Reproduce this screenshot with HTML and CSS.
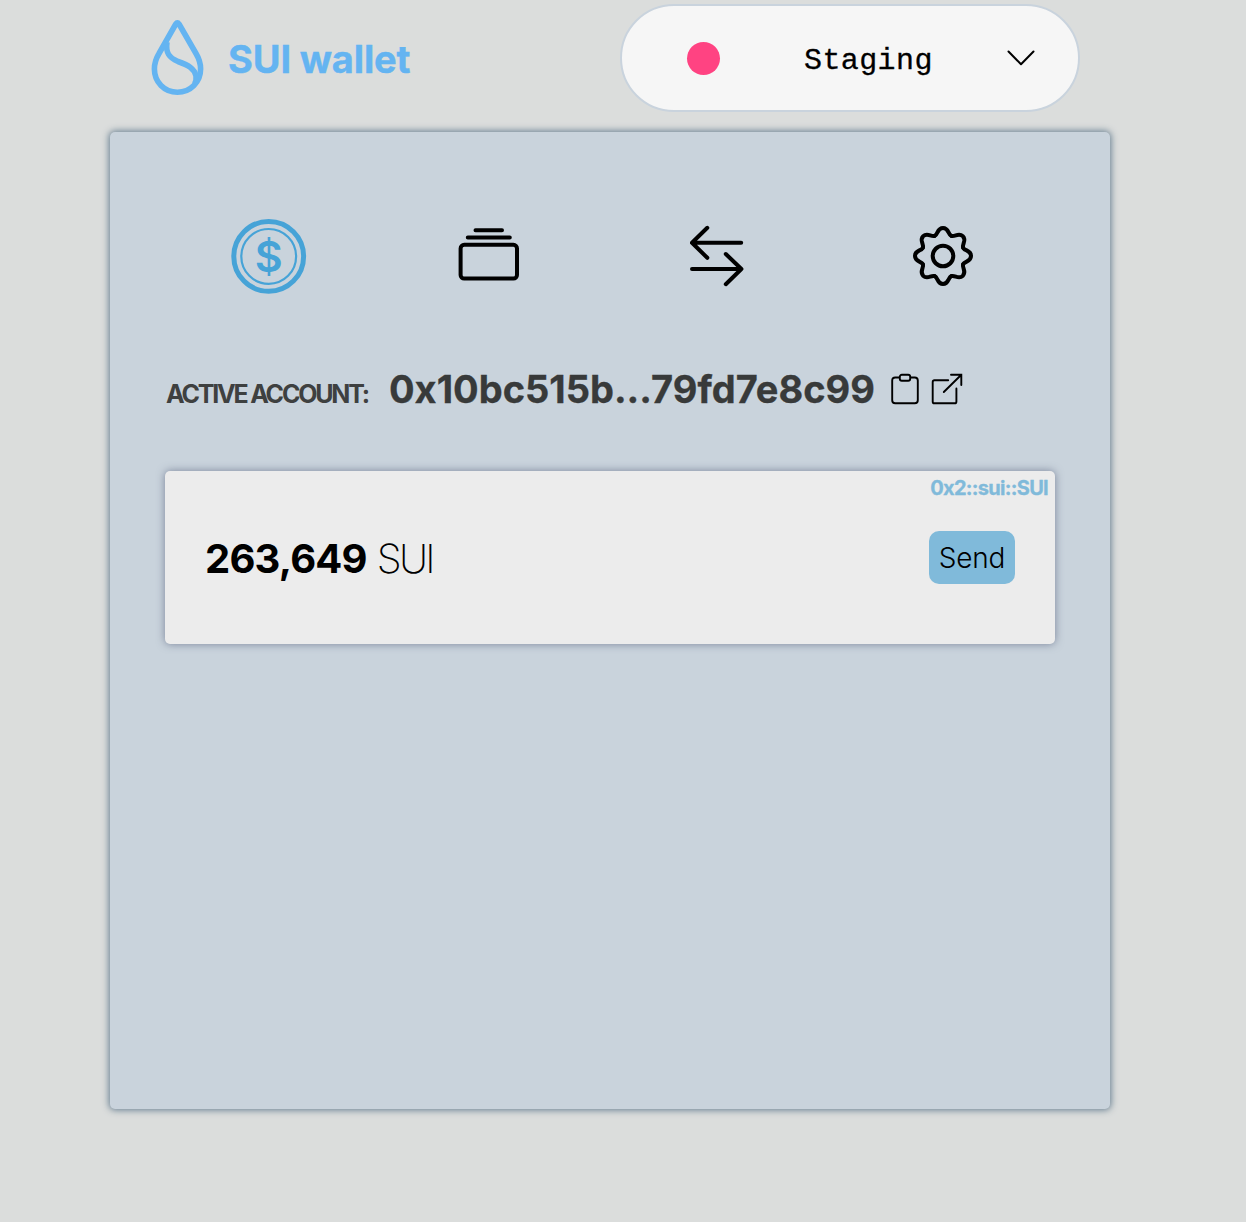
FILE: index.html
```html
<!DOCTYPE html>
<html lang="en">
<head>
<meta charset="utf-8">
<title>SUI wallet</title>
<link rel="stylesheet" href="styles.css">
</head>
<body>
<header class="header">
  <div class="brand">
    <svg class="drop" width="56" height="80" viewBox="0 0 56 80">
      <path d="M25.8 6 Q27.4 3.6 29 6 L46 35.5 C49 40.5 50.6 45 50.6 51 C50.6 64 40.5 74.2 27.4 74.2 C14.3 74.2 4.4 64 4.4 51 C4.4 45 6 40.5 9 35.5 Z"/>
      <path d="M17 24 C15.5 35 19 39.5 28 43.5 C38 47 44.5 50.5 46 58 C46.4 61 45.8 64 44.5 66"/>
    </svg>
    <h1 class="brand-name">SUI wallet</h1>
  </div>
  <button class="network">
    <span class="dot"></span>
    <span class="network-name">Staging</span>
    <svg class="chevron" width="30" height="18" viewBox="0 0 30 18"><path d="M2.5 2.5 L15 15.3 L27.5 2.5"/></svg>
  </button>
</header>
<main class="panel">
  <nav class="tabs">
    <a class="tab"><svg class="icon coin" width="76" height="76" viewBox="0 0 76 76">
      <circle class="rim" cx="37.7" cy="38.4" r="34.9"/><circle class="ring" cx="37.7" cy="38.4" r="27.4"/>
      <text class="dollar" x="37.7" y="53.7" text-anchor="middle">$</text></svg></a>
    <a class="tab tab-wallet"><svg class="icon" width="62" height="62" viewBox="0 0 62 62">
      <path d="M17.5 5.2H44M9.8 12.6H51.8"/><rect x="2.6" y="19.8" width="56.4" height="33.8" rx="3.6"/></svg></a>
    <a class="tab tab-swap"><svg class="icon" width="54" height="62" viewBox="0 0 54 62">
      <path d="M51.2 17.7H2M17.3 2.8L2 17.8L17.3 32.8M2 44H51.4M35.8 29L51.4 44L35.8 59.2"/></svg></a>
    <a class="tab tab-settings"><svg class="icon" width="62" height="62" viewBox="-31 -31 62 62">
      <defs><path id="tooth" d="M-8.35 -20.14C-4.8 -21.6 -6 -28 0 -28C6 -28 4.8 -21.6 8.35 -20.14"/></defs>
      <use href="#tooth"/><use href="#tooth" transform="rotate(45)"/><use href="#tooth" transform="rotate(90)"/><use href="#tooth" transform="rotate(135)"/>
      <use href="#tooth" transform="rotate(180)"/><use href="#tooth" transform="rotate(225)"/><use href="#tooth" transform="rotate(270)"/><use href="#tooth" transform="rotate(315)"/>
      <circle r="10.3"/></svg></a>
  </nav>
  <div class="account">
    <span class="account-label">ACTIVE ACCOUNT:</span>
    <span class="account-id">0x10bc515b...79fd7e8c99</span>
    <svg class="action" width="28" height="32" viewBox="0 0 28 32"><path d="M7.8 4.5H4.2Q1.2 4.5 1.2 7.5V27.3Q1.2 30.3 4.2 30.3H23.8Q26.8 30.3 26.8 27.3V7.5Q26.8 4.5 23.8 4.5H20.2"/><rect x="8.8" y="1.8" width="10.4" height="5.9" rx="2"/></svg>
    <svg class="action" width="32" height="32" viewBox="0 0 32 32"><path d="M17.2 7.3H3.4Q1.7 7.3 1.7 9V28.4Q1.7 30.3 3.4 30.3H23.7Q25.4 30.3 25.4 28.4V15.5M12.8 19L30.3 1.7M20 1.7H30.3V12"/></svg>
  </div>
  <section class="card">
    <span class="coin-type">0x2::sui::SUI</span>
    <div class="balance"><span class="amount">263,649</span><span class="symbol">SUI</span></div>
    <button class="send">Send</button>
  </section>
</main>
</body>
</html>
```
FILE: styles.css
```css
* { box-sizing: border-box; }
body {
  margin: 0;
  min-height: 1222px;
  background: #dbdddc;
  font-family: Inter, "Liberation Sans", sans-serif;
}
button { font: inherit; color: #000; }
.header {
  height: 132px;
  width: 1080px;
  padding: 4px 0 0 150px;
  display: flex;
  justify-content: space-between;
  align-items: flex-start;
}
.brand { display: flex; align-items: center; gap: 22px; height: 108px; }
.drop { fill: none; stroke: #64b4f1; stroke-width: 5.6; stroke-linejoin: round; }
.brand-name {
  margin: 0;
  padding-top: 1px;
  color: #64b4f1;
  font-size: 38px;
  line-height: 46px;
  font-weight: 700;
  letter-spacing: -0.15px;
  white-space: nowrap;
  -webkit-text-stroke: 0.4px #64b4f1;
}
.network {
  width: 460px;
  height: 108px;
  padding: 0 42px 0 65px;
  display: flex;
  align-items: center;
  background: #f6f6f6;
  border: 2px solid #c9d3dd;
  border-radius: 54px;
}
.dot { width: 33px; height: 33px; border-radius: 50%; background: #ff4382; }
.network-name {
  margin-left: 84px;
  padding-top: 5px;
  font: 30px "Liberation Mono", monospace;
  letter-spacing: 0.4px;
  -webkit-text-stroke: 0.3px #000;
}
.chevron { margin-left: auto; fill: none; stroke: #000; stroke-width: 2; stroke-linecap: round; stroke-linejoin: round; }
.panel {
  width: 1000px;
  height: 977px;
  margin-left: 110px;
  padding: 86px 55px 0;
  background: #c9d3dc;
  border-radius: 5px;
  box-shadow: 0 0 7px 1px #647c8f;
}
.tabs {
  height: 75px;
  padding-left: 66px;
  display: flex;
  align-items: center;
}
.tab { display: flex; }
.tab-wallet { margin-left: 151px; }
.tab-swap { margin-left: 170px; }
.tab-settings { margin-left: 168px; }
.icon { fill: none; stroke: #000; stroke-width: 4; stroke-linecap: round; stroke-linejoin: round; }
.coin { stroke: #46a3d7; }
.rim { stroke-width: 5; }
.ring { stroke-width: 2.2; }
.dollar { fill: #46a3d7; stroke: none; font-size: 43px; font-weight: 600; }
.account { height: 50px; margin-top: 71px; display: flex; align-items: center; }
.account-label {
  width: 224px;
  padding: 9px 0 0 1px;
  color: #3e4040;
  font-size: 25px;
  line-height: 30px;
  font-weight: 700;
  letter-spacing: -2.2px;
  white-space: nowrap;
}
.account-id {
  width: 487px;
  margin-right: 15px;
  color: #383a3a;
  font-size: 38px;
  line-height: 46px;
  font-weight: 700;
  white-space: nowrap;
  -webkit-text-stroke: 0.3px #383a3a;
}
.action { fill: none; stroke: #000; stroke-width: 1.9; stroke-linecap: round; margin-right: 13px; }
.action + .action { margin-left: -1px; }
.card {
  position: relative;
  height: 173px;
  margin-top: 57px;
  padding: 0 40px;
  display: flex;
  align-items: center;
  justify-content: space-between;
  background: #ececec;
  border-radius: 5px;
  box-shadow: 0 0 9px rgba(70, 80, 110, 0.6);
}
.coin-type {
  position: absolute;
  top: 5px;
  right: 7px;
  color: #80bada;
  font-size: 20px;
  line-height: 24px;
  font-weight: 700;
  letter-spacing: -0.7px;
  -webkit-text-stroke: 0.3px #80bada;
}
.balance { display: flex; align-items: baseline; gap: 10px; padding-top: 2px; font-size: 40px; line-height: 48px; }
.amount { font-weight: 700; letter-spacing: -0.8px; }
.symbol { font-weight: 200; letter-spacing: -2.7px; }
.send {
  width: 86px;
  height: 53px;
  padding: 1px 0 0;
  border: 0;
  border-radius: 10px;
  background: #80bada;
  font-size: 28px;
  font-weight: 350;
  letter-spacing: -0.2px;
}
```
